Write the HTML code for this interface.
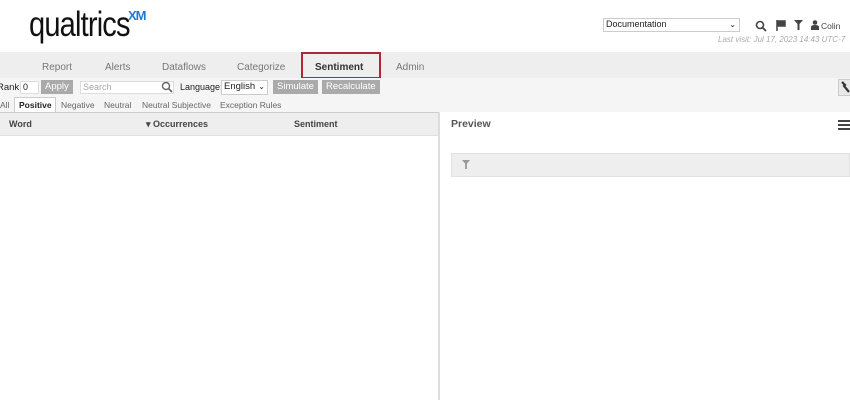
<!DOCTYPE html>
<html><head><style>
*{margin:0;padding:0;box-sizing:border-box}
body{width:850px;height:400px;overflow:hidden;background:#fff;font-family:"Liberation Sans",sans-serif;position:relative;color:#333}
.a{position:absolute}
.logo{left:29px;top:5px;font-size:35px;color:#111;letter-spacing:-1px;transform:scaleX(.83);transform-origin:left}
.xm{left:128px;top:8px;font-size:13px;color:#1b7ad6;font-weight:bold;letter-spacing:-1px}
.nav{left:0;top:52px;width:850px;height:26px;background:#eeeeee}
.nav span{position:absolute;top:10px;font-size:10px;color:#777}
.tb{left:0;top:78px;width:850px;height:34px;background:#f5f5f5}
.btn{background:#aaa;color:#fff;font-size:9.5px;height:14px;line-height:14px;padding:0 4px;position:absolute;top:80px}
.inp{position:absolute;background:#fff;border:1px solid #ddd;height:13px;font-size:9px;line-height:11px;padding-left:2px}
.tabs span{position:absolute;top:100px;font-size:8.5px;color:#666}
</style></head><body>
<div class="a logo">qualtrics</div>
<div class="a xm">XM</div>
<div class="inp" style="left:603px;top:18px;width:137px;height:14px;border-color:#ccc;font-size:9px;color:#222">Documentation<span style="position:absolute;right:3px;top:0;font-size:8px">⌄</span></div>
<svg class="a" style="left:755px;top:20px" width="12" height="12" viewBox="0 0 12 12"><circle cx="5" cy="5" r="3.5" fill="none" stroke="#444" stroke-width="1.6"/><path d="M7.5 7.5L11 11" stroke="#444" stroke-width="1.8"/></svg>
<svg class="a" style="left:776px;top:20px" width="10" height="11" viewBox="0 0 10 11"><path d="M1 0v11M1 1h8v5H1" stroke="#444" stroke-width="1.5" fill="#444"/></svg>
<svg class="a" style="left:794px;top:20px" width="9" height="10" viewBox="0 0 9 10"><path d="M0 0h9L5.5 4v6h-2V4z" fill="#444"/></svg>
<svg class="a" style="left:811px;top:20px" width="8" height="10" viewBox="0 0 8 10"><circle cx="4" cy="2.5" r="2.3" fill="#444"/><path d="M0 10V7q0-2 4-2t4 2v3z" fill="#444"/></svg>
<div class="a" style="left:821px;top:21px;font-size:8.5px;color:#444">Colin</div>
<div class="a" style="left:718px;top:35px;font-size:8px;color:#aaa;font-style:italic">Last visit: Jul 17, 2023 14:43 UTC-7</div>
<div class="a nav">
<span style="left:42px">Report</span><span style="left:105px">Alerts</span><span style="left:162px">Dataflows</span><span style="left:237px">Categorize</span><span style="left:315px;color:#333;font-weight:bold">Sentiment</span><span style="left:396px">Admin</span>
</div>
<div class="a" style="left:301px;top:52px;width:80px;height:27px;border:2px solid #b3263a"></div>
<div class="a tb"></div>
<div class="a" style="left:-3px;top:82px;font-size:9.5px;color:#222">Rank:</div>
<div class="inp" style="left:20px;top:81px;width:19px;color:#222">0</div>
<div class="btn" style="left:41px">Apply</div>
<div class="inp" style="left:80px;top:81px;width:94px;color:#aaa">Search</div>
<svg class="a" style="left:161px;top:81px" width="12" height="12" viewBox="0 0 12 12"><circle cx="5" cy="5" r="3.5" fill="none" stroke="#666" stroke-width="1.4"/><path d="M7.5 7.5L11 11" stroke="#666" stroke-width="1.6"/></svg>
<div class="a" style="left:180px;top:82px;font-size:9px;color:#222">Language:</div>
<div class="inp" style="left:221px;top:80px;width:47px;height:15px;font-size:9.5px;color:#222;border-color:#ccc">English<span style="position:absolute;right:2px;font-size:8px">⌄</span></div>
<div class="btn" style="left:273px">Simulate</div>
<div class="btn" style="left:322px">Recalculate</div>
<div class="a" style="left:838px;top:79px;width:14px;height:17px;background:#e8e8e8;border:1px solid #ccc"></div>
<svg class="a" style="left:840px;top:81px" width="10" height="12" viewBox="0 0 10 12"><path d="M2 1l3 3-1 1 5 6" stroke="#333" stroke-width="2.2" fill="none"/></svg>
<div class="tabs">
<span style="left:0">All</span>
<span style="left:14px;top:97px;height:15px;width:42px;background:#fff;border:1px solid #ccc;border-bottom:none;padding:2px 0 0 4px;color:#222;font-weight:bold">Positive</span>
<span style="left:61px">Negative</span><span style="left:104px">Neutral</span><span style="left:142px">Neutral Subjective</span><span style="left:220px">Exception Rules</span>
</div>
<div class="a" style="left:0;top:112px;width:438px;height:24px;background:#eee;border-top:1px solid #ccc;border-bottom:1px solid #e0e0e0"></div>
<div class="a" style="left:9px;top:119px;font-size:9px;font-weight:bold;color:#444">Word</div>
<div class="a" style="left:146px;top:119px;font-size:9px;font-weight:bold;color:#444">▾ Occurrences</div>
<div class="a" style="left:294px;top:119px;font-size:9px;font-weight:bold;color:#444">Sentiment</div>
<div class="a" style="left:438px;top:112px;width:2px;height:288px;background:#ddd"></div>
<div class="a" style="left:451px;top:118px;font-size:10.5px;font-weight:bold;color:#555">Preview</div>
<div class="a" style="left:838px;top:120px;width:12px;height:2px;background:#444;box-shadow:0 4px 0 #444,0 8px 0 #444"></div>
<div class="a" style="left:451px;top:153px;width:399px;height:24px;background:#eee;border:1px solid #e2e2e2"></div>
<svg class="a" style="left:462px;top:160px" width="8" height="9" viewBox="0 0 9 10"><path d="M0 0h9L5.5 4v6h-2V4z" fill="#999"/></svg>
</body></html>
